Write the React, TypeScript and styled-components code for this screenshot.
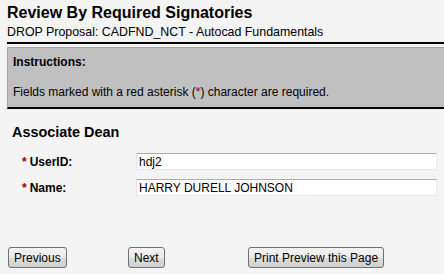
import React from 'react';
import styled, { createGlobalStyle } from 'styled-components';

// ─── Global ──────────────────────────────────────────────────────────────────

const GlobalStyle = createGlobalStyle`
  html, body {
    margin: 0;
    padding: 0;
    background: #f4f4f4;
    overflow: hidden;
  }
  body {
    font-family: "Liberation Sans", Arial, sans-serif;
    color: #000;
  }
`;

const REQUIRED_RED = '#990000';

// ─── Styled Components ───────────────────────────────────────────────────────

const Page = styled.div`
  padding: 3px 0 0 7px;
`;

const Header = styled.div`
  border-bottom: 2px solid #000;
  padding-bottom: 2px;
  margin-right: -20px;
`;

const Title = styled.h1`
  margin: 0;
  font-size: 16px;
  line-height: 20px;
  font-weight: 700;
`;

const Subtitle = styled.div`
  margin-top: 2px;
  font-size: 12.4px;
  line-height: 15px;
`;

const InstructionsBox = styled.div`
  margin: 3px -20px 0 0;
  background: #c0c0c0;
  border-top: 1px solid #a4a4a4;
  border-left: 1px solid #a4a4a4;
  border-bottom: 2px solid #000;
  padding: 7px 6px 8px 5px;
  font-size: 12px;
  line-height: 14px;
`;

const InstructionsTitle = styled.div`
  font-weight: 700;
`;

const InstructionsText = styled.div`
  margin-top: 16px;
`;

const Asterisk = styled.span`
  color: ${REQUIRED_RED};
`;

const SectionTitle = styled.h2`
  margin: 15px 0 0 5px;
  font-size: 14.4px;
  line-height: 17px;
  font-weight: 700;
`;

const FormGrid = styled.div`
  display: grid;
  grid-template-columns: 114px 1fr;
  row-gap: 9px;
  align-items: center;
  margin: 12px 7px 0 15px;
`;

const Label = styled.label`
  font-size: 12px;
  font-weight: 700;
  line-height: 14px;

  ${Asterisk} {
    margin-right: 3px;
  }
`;

const TextInput = styled.input`
  box-sizing: border-box;
  width: 100%;
  height: 17px;
  margin: 0;
  padding: 0 2px;
  border: 1px solid;
  border-color: #abadb3 #e3e9ef #e3e9ef #e2e3ea;
  background: #fff;
  font-family: "Liberation Sans", Arial, sans-serif;
  font-size: 12px;
  color: #000;
  outline: none;
`;

const ButtonBar = styled.div`
  display: grid;
  grid-template-columns: 120px 120px auto;
  justify-items: start;
  margin: 51px 0 0 1px;
`;

const Button = styled.button`
  box-sizing: border-box;
  height: 21px;
  padding: 0 5px;
  border: 1px solid #707070;
  border-radius: 3px;
  background: linear-gradient(#f2f2f2 0%, #ebebeb 50%, #dddddd 51%, #cfcfcf 100%);
  font-family: "Liberation Sans", Arial, sans-serif;
  font-size: 12px;
  color: #000;
  cursor: pointer;
`;

// ─── Component ───────────────────────────────────────────────────────────────

const fields = [
  { id: 'userid', label: 'UserID:', value: 'hdj2' },
  { id: 'name', label: 'Name:', value: 'HARRY DURELL JOHNSON' },
];

const App: React.FC = () => (
  <>
    <GlobalStyle />
    <Page>
      <Header>
        <Title>Review By Required Signatories</Title>
        <Subtitle>DROP Proposal: CADFND_NCT - Autocad Fundamentals</Subtitle>
      </Header>

      <InstructionsBox>
        <InstructionsTitle>Instructions:</InstructionsTitle>
        <InstructionsText>
          Fields marked with a red asterisk (<Asterisk>*</Asterisk>) character are required.
        </InstructionsText>
      </InstructionsBox>

      <SectionTitle>Associate Dean</SectionTitle>

      <FormGrid>
        {fields.map(f => (
          <React.Fragment key={f.id}>
            <Label htmlFor={f.id}>
              <Asterisk>*</Asterisk>
              {f.label}
            </Label>
            <TextInput id={f.id} defaultValue={f.value} />
          </React.Fragment>
        ))}
      </FormGrid>

      <ButtonBar>
        <Button>Previous</Button>
        <Button>Next</Button>
        <Button>Print Preview this Page</Button>
      </ButtonBar>
    </Page>
  </>
);

export default App;
